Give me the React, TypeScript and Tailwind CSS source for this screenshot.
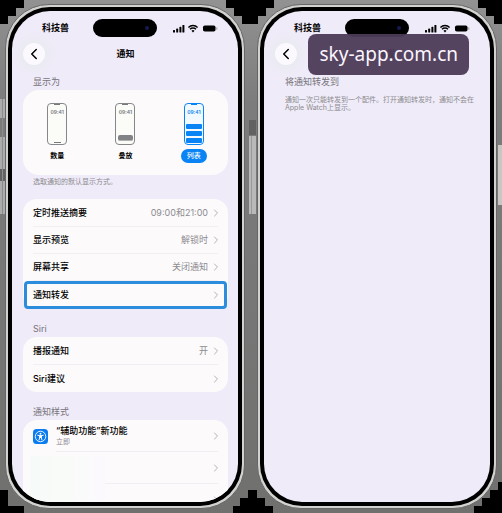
import type { ReactNode } from 'react';
import { ChevronLeft, ChevronRight } from 'lucide-react';

type SettingType = {
  label: string;
  value?: string;
  highlighted?: boolean;
};

type PreviewType = 'count' | 'stack' | 'list';

const notificationSettings: SettingType[] = [
  { label: '定时推送摘要', value: '09:00和21:00' },
  { label: '显示预览', value: '解锁时' },
  { label: '屏幕共享', value: '关闭通知' },
  { label: '通知转发', highlighted: true },
];

const siriSettings: SettingType[] = [{ label: '播报通知', value: '开' }, { label: 'Siri建议' }];

const displayModes: { type: PreviewType; label: string }[] = [
  { type: 'count', label: '数量' },
  { type: 'stack', label: '叠放' },
  { type: 'list', label: '列表' },
];

const Backdrop = () => (
  <svg
    className="absolute inset-0 h-full w-full"
    viewBox="0 0 502 513"
    preserveAspectRatio="none"
    shapeRendering="crispEdges"
    aria-hidden="true"
  >
    <defs>
      <linearGradient id="metal" x1="0" y1="0" x2="0" y2="1">
        <stop offset="0" stopColor="#929292" />
        <stop offset=".2" stopColor="#7c7c7c" />
        <stop offset="1" stopColor="#70716f" />
      </linearGradient>
    </defs>
    <rect width="502" height="513" fill="url(#metal)" />
    <g fill="#000">
      <path d="M0 0H24V8H16V16H8V24H0Z" />
      <path d="M226 0H274V8H266V16H258V24H242V16H234V8H226Z" />
      <path d="M478 0H502V24H494V16H486V8H478Z" />
      <path d="M0 490H8V506H24V513H0Z" />
      <path d="M248 490H257V498H265V506H273V513H233V506H240V498H248Z" />
      <path d="M502 482V513H474V506H482V498H490V490H498V482Z" />
    </g>
    {/* side buttons */}
    <g fill="#adadad">
      <rect x="0" y="99" width="5" height="19" />
      <rect x="0" y="137" width="5" height="32" />
      <rect x="0" y="181" width="5" height="33" />
      <rect x="249" y="136" width="7" height="78" fill="#b9b9b8" />
      <rect x="498" y="145" width="4" height="60" fill="#c9c7c3" />
    </g>
    <g fill="#626262">
      <rect x="0" y="169" width="5" height="12" />
      <rect x="249" y="120" width="7" height="15" />
    </g>
    <rect x="2" y="99" width="1" height="115" fill="#8c8c8c" />
    <rect x="251" y="136" width="1" height="78" fill="#9a9a9a" />
  </svg>
);

const StatusIcons = () => (
  <svg width="45" height="9" viewBox="0 0 45 9" aria-hidden="true">
    <rect x="0" y="6" width="2" height="2.5" rx=".6" />
    <rect x="3.2" y="4.6" width="2" height="3.9" rx=".6" />
    <rect x="6.4" y="2.8" width="2" height="5.7" rx=".6" />
    <rect x="9.4" y="1" width="2" height="7.5" rx=".6" />
    <g fill="none" stroke="#000" strokeWidth="1.4">
      <path d="M15.4 3.4a6.6 6.6 0 0 1 9.2 0" />
      <path d="M17 5.3a4.2 4.2 0 0 1 6 0" />
    </g>
    <path d="M18.5 6.8a2.2 2.2 0 0 1 3 0L20 8.6Z" />
    <rect x="30" y="1.5" width="12.5" height="6" rx="1.8" />
    <rect x="43.3" y="3.3" width="1" height="2.4" rx=".5" fill="#999" />
  </svg>
);

const Phone = ({ title, children }: { title: string; children: ReactNode }) => (
  <div className="relative h-full min-w-0 flex-1 rounded-[44px] border border-[#666] bg-[#d2d2d0] p-[2px]">
    <div className="h-full rounded-[42px] bg-black p-1">
      <div className="flex h-full flex-col overflow-hidden rounded-[38px] bg-[#efebf8] pl-[11px] pr-[10px]">
        <div className="grid shrink-0 grid-cols-3 items-center pt-2">
          <span className="pl-[19px] text-[9px] font-bold leading-[18px]">科技兽</span>
          <div className="flex h-[18px] w-16 items-center justify-end justify-self-center rounded-full bg-black pr-2">
            <span className="h-1 w-1 rounded-full bg-[#15194d]" />
          </div>
          <div className="justify-self-end pr-[10px]">
            <StatusIcons />
          </div>
        </div>
        <header className="mt-[5px] grid h-6 shrink-0 grid-cols-3 items-center">
          <button
            aria-label="返回"
            className="flex h-[22px] w-[22px] items-center justify-center rounded-full bg-[#fbf9fd] shadow-[0_0_8px_4px_#e8ebf0]"
          >
            <ChevronLeft size={18} strokeWidth={2} />
          </button>
          <h1 className="text-center text-[9px] font-bold">{title}</h1>
        </header>
        {children}
      </div>
    </div>
  </div>
);

const SectionTitle = ({ children }: { children: ReactNode }) => (
  <h2 className="shrink-0 px-[10px] text-[9px] leading-3 text-[#77747c]">{children}</h2>
);

const Arrow = () => (
  <ChevronRight className="ml-[2px] -mr-1 shrink-0 text-[#b4b1b6]" size={12} strokeWidth={2} />
);

const PreviewIcon = ({ type }: { type: PreviewType }) => (
  <span
    className={`flex h-[42px] w-5 flex-col items-center rounded-[4px] border pb-px ${
      type === 'list' ? 'border-[#0a84f5] bg-[#f3faff] text-[#0a84f5]' : 'border-[#85878b] bg-[#fbfbf8] text-[#77797d]'
    }`}
  >
    <span className="h-px w-[6px] bg-current" />
    <span className="mt-1 text-[5px] font-semibold leading-[6px]">09:41</span>
    <span className="mt-auto flex flex-col items-center gap-[2px]">
      {type === 'count' && <span className="h-px w-[7px] bg-current" />}
      {type === 'stack' && (
        <span className="mb-[2px] h-[6px] w-[15px] rounded-[2px] border-b border-[#b1b1b4] bg-[#808286]" />
      )}
      {type === 'list' && (
        <>
          <span className="h-[5px] w-4 rounded-[1px] bg-current" />
          <span className="h-[5px] w-4 rounded-[1px] bg-current" />
          <span className="h-[5px] w-4 rounded-[1px] bg-current" />
        </>
      )}
    </span>
  </span>
);

const DisplayPicker = () => (
  <div className="mt-[2px] grid shrink-0 grid-cols-3 rounded-[16px] bg-[#fcfafb] pt-[13px] pb-3">
    {displayModes.map(({ type, label }) => (
      <label key={type} className="relative flex flex-col items-center">
        <input type="radio" name="display" className="peer sr-only" defaultChecked={type === 'list'} />
        <PreviewIcon type={type} />
        <span className="mt-1 rounded-full px-[6px] text-[7px] font-semibold leading-[14px] peer-checked:bg-[#0a84f5] peer-checked:font-medium peer-checked:text-white">
          {label}
        </span>
      </label>
    ))}
  </div>
);

const SettingsRow = ({ label, value, highlighted }: SettingType) => (
  <li className={highlighted ? 'px-px' : 'group px-[10px]'}>
    <button
      className={`flex w-full items-center text-left text-[9px] font-medium ${
        highlighted
          ? 'h-7 rounded-[4px] border-[3px] border-[#2b8ddc] px-[6px]'
          : 'h-[27px] border-b border-[#f1eef4] group-last:border-b-0'
      }`}
    >
      <span className="flex-1">{label}</span>
      {value && <span className="font-normal text-[#8d8b90]">{value}</span>}
      <Arrow />
    </button>
  </li>
);

const SettingsCard = ({ settings }: { settings: SettingType[] }) => (
  <ul className="shrink-0 rounded-[14px] bg-[#fcfafb] pt-px">
    {settings.map((setting) => (
      <SettingsRow key={setting.label} {...setting} />
    ))}
  </ul>
);

const AccessibilityIcon = () => (
  <svg width="15" height="15" viewBox="0 0 30 30" className="shrink-0" aria-hidden="true">
    <rect width="30" height="30" rx="7" fill="#0a7cf0" />
    <circle cx="15" cy="15" r="10.5" fill="none" stroke="#fff" strokeWidth="1.8" />
    <circle cx="15" cy="9.4" r="1.9" fill="#fff" />
    <path
      d="M9.5 12.6 13.5 13.5V17L12 22M20.5 12.6 16.5 13.5V17L18 22M13.5 13.5H16.5M13.5 16.5H16.5"
      fill="none"
      stroke="#fff"
      strokeWidth="1.9"
      strokeLinecap="round"
    />
    <rect x="13" y="12.5" width="4" height="5.5" fill="#fff" />
  </svg>
);

const AppList = () => (
  <div className="mt-[2px] shrink-0 rounded-t-[14px] bg-[#fcfafb] px-[10px]">
    <button className="flex h-8 w-full items-center text-left">
      <AccessibilityIcon />
      <span className="ml-2 flex h-8 flex-1 items-center border-b border-[#f1eef4]">
        <span className="flex-1">
          <span className="block text-[9px] font-medium leading-3">“辅助功能”新功能</span>
          <span className="block text-[7px] leading-[10px] text-[#8d8b90]">立即</span>
        </span>
        <Arrow />
      </span>
    </button>
    <div className="flex">
      <div className="mt-1 -ml-[3px] w-[75px] shrink-0 bg-linear-to-r from-[#f6faf8] via-[#f9fbf8] to-[#fcf9fe]" />
      <div className="flex-1">
        <button aria-label="应用通知" className="flex h-8 w-full items-center justify-end border-b border-[#f1eef4]">
          <Arrow />
        </button>
        <button aria-label="应用通知" className="flex h-8 w-full items-center justify-end">
          <Arrow />
        </button>
      </div>
    </div>
  </div>
);

const App = () => (
  <main className="relative h-screen overflow-hidden bg-black px-[5px] py-1 font-['Inter','Noto_Sans_CJK_SC',sans-serif] text-black">
    <Backdrop />
    <div className="flex h-full gap-3">
      <Phone title="通知">
        <div className="mt-[10px] shrink-0">
          <SectionTitle>显示为</SectionTitle>
          <DisplayPicker />
          <p className="mt-[2px] px-[10px] text-[7px] leading-[10px] text-[#8d8b90]">选取通知的默认显示方式。</p>
        </div>
        <section className="mt-3 shrink-0">
          <SettingsCard settings={notificationSettings} />
        </section>
        <section className="mt-[14px] flex shrink-0 flex-col gap-[2px]">
          <SectionTitle>Siri</SectionTitle>
          <SettingsCard settings={siriSettings} />
        </section>
        <section className="mt-[14px] shrink-0">
          <SectionTitle>通知样式</SectionTitle>
          <AppList />
        </section>
      </Phone>
      <Phone title="通知转发">
        <section className="mt-[10px]">
          <SectionTitle>将通知转发到</SectionTitle>
          <p className="mt-2 pl-[10px] text-[7px] leading-2 text-[#8d8b90]">
            通知一次只能转发到一个配件。打开通知转发时，通知不会在
            <br />
            Apple Watch上显示。
          </p>
        </section>
      </Phone>
    </div>
    <div className="absolute top-[34px] right-[33px] rounded-lg bg-[#4c3b57]/95 px-[11px] font-['Noto_Sans',sans-serif] text-[19px] leading-[41px] text-[#fbf5ff]">
      sky-app.com.cn
    </div>
  </main>
);

export default App;
